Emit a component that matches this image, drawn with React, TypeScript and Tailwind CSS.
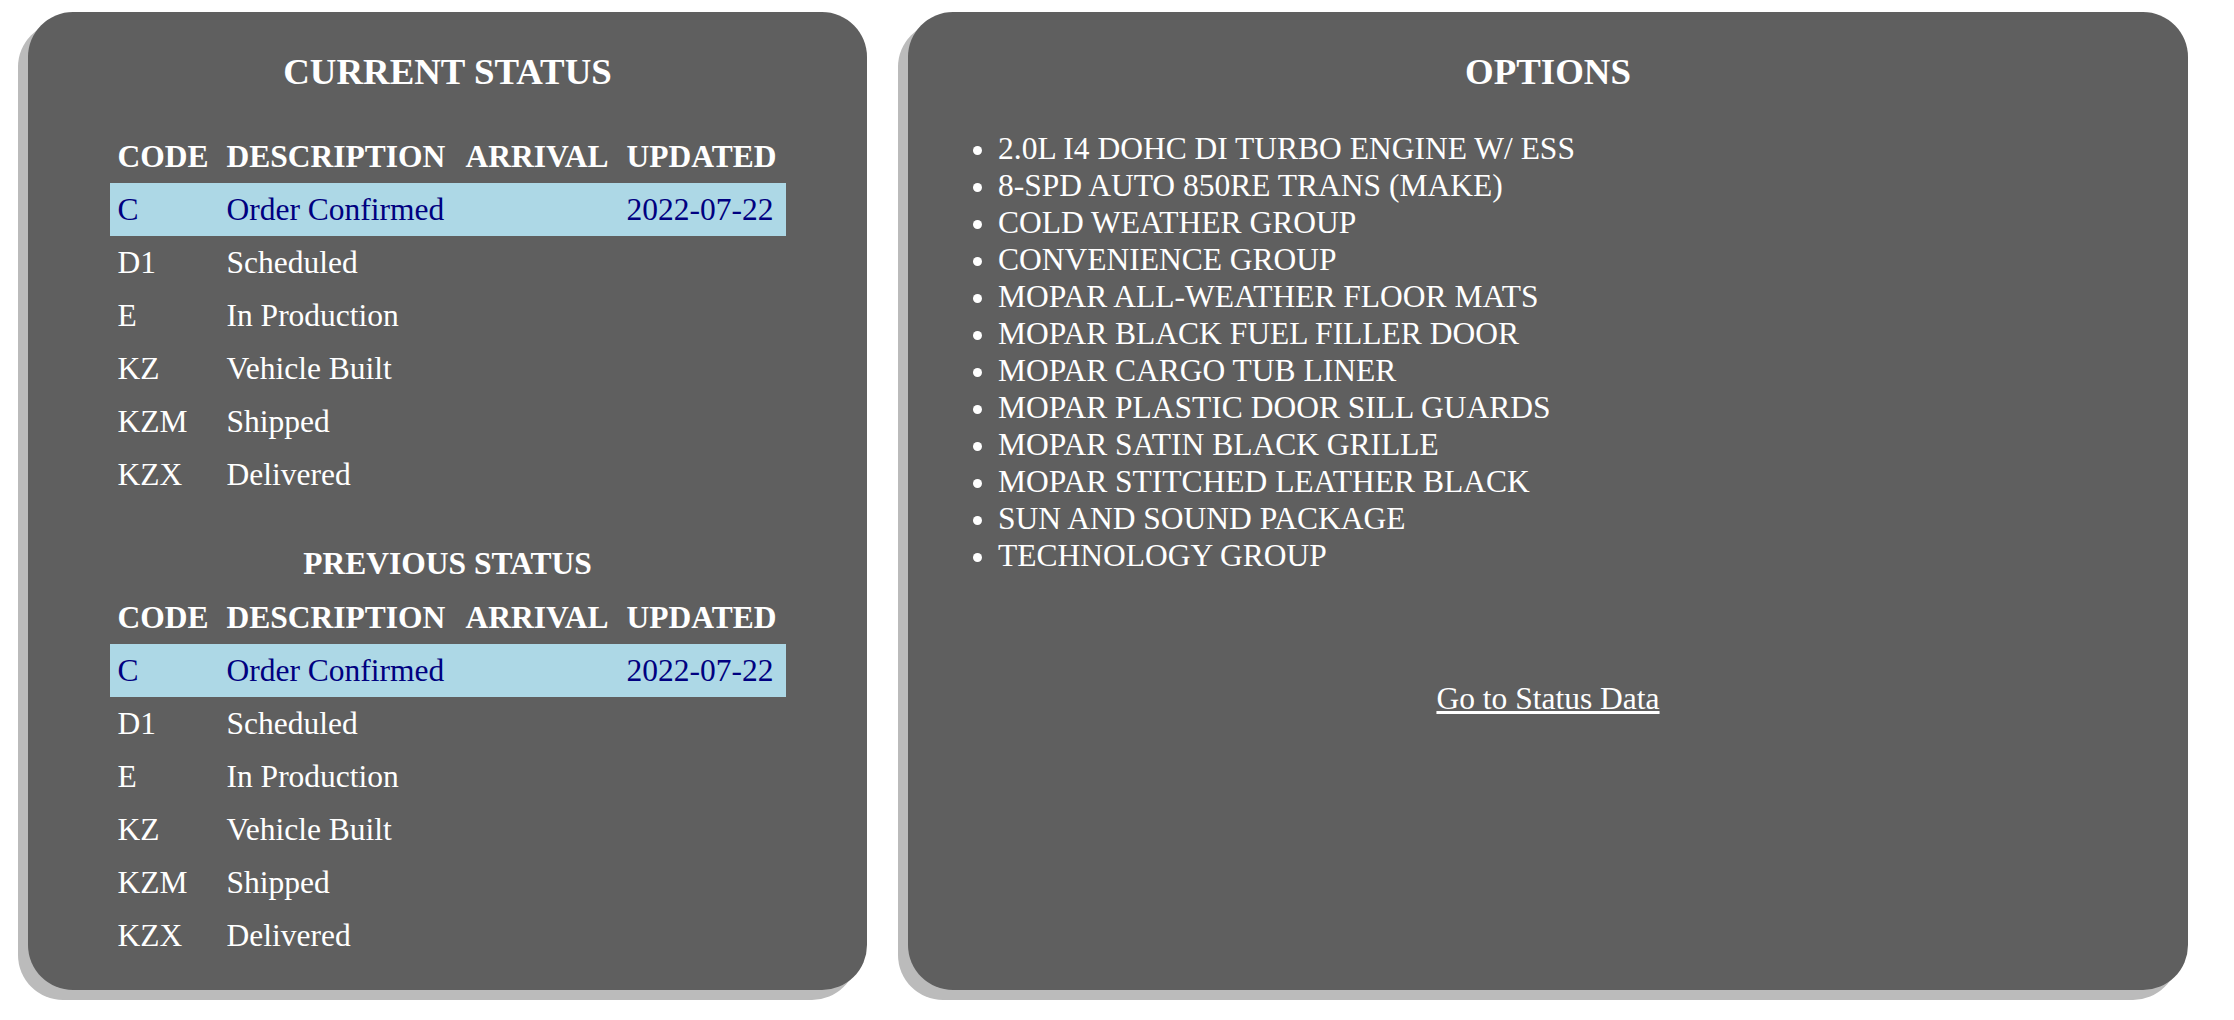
const rows = [
  { code: "C", desc: "Order Confirmed", arrival: "", updated: "2022-07-22", current: true },
  { code: "D1", desc: "Scheduled", arrival: "", updated: "" },
  { code: "E", desc: "In Production", arrival: "", updated: "" },
  { code: "KZ", desc: "Vehicle Built", arrival: "", updated: "" },
  { code: "KZM", desc: "Shipped", arrival: "", updated: "" },
  { code: "KZX", desc: "Delivered", arrival: "", updated: "" },
];

const options = [
  "2.0L I4 DOHC DI TURBO ENGINE W/ ESS",
  "8-SPD AUTO 850RE TRANS (MAKE)",
  "COLD WEATHER GROUP",
  "CONVENIENCE GROUP",
  "MOPAR ALL-WEATHER FLOOR MATS",
  "MOPAR BLACK FUEL FILLER DOOR",
  "MOPAR CARGO TUB LINER",
  "MOPAR PLASTIC DOOR SILL GUARDS",
  "MOPAR SATIN BLACK GRILLE",
  "MOPAR STITCHED LEATHER BLACK",
  "SUN AND SOUND PACKAGE",
  "TECHNOLOGY GROUP",
];

function StatusTable() {
  return (
    <table className="mx-auto w-[676px] table-fixed border-collapse">
      <thead>
        <tr className="h-[53px] text-left font-bold">
          <th className="w-[109px] px-[8px]">CODE</th>
          <th className="w-[239px] px-[8px]">DESCRIPTION</th>
          <th className="w-[161px] px-[8px]">ARRIVAL</th>
          <th className="w-[167px] px-[8px]">UPDATED</th>
        </tr>
      </thead>
      <tbody>
        {rows.map((r) => (
          <tr key={r.code} className={r.current ? "h-[53px] bg-[#add8e6] text-[#000080]" : "h-[53px]"}>
            <td className="px-[8px] whitespace-nowrap">{r.code}</td>
            <td className="px-[8px] whitespace-nowrap">{r.desc}</td>
            <td className="px-[8px] whitespace-nowrap">{r.arrival}</td>
            <td className="px-[8px] whitespace-nowrap">{r.updated}</td>
          </tr>
        ))}
      </tbody>
    </table>
  );
}

export default function App() {
  return (
    <div className="flex min-h-[1020px] gap-[41px] bg-white pl-[28px] pt-[12px] font-['Liberation_Serif',serif] text-[31.5px] leading-[normal] text-white">
      {/* Status card */}
      <section className="h-[978px] w-[839px] rounded-[45px] bg-[#5f5f5f] shadow-[-10px_10px_0_#bbbbbb]">
        <h3 className="mt-[38px] mb-[37px] text-center text-[36.85px] font-bold">CURRENT STATUS</h3>
        <StatusTable />
        <h4 className="mt-[45px] mb-[9px] text-center font-bold">PREVIOUS STATUS</h4>
        <StatusTable />
      </section>

      {/* Options card */}
      <section className="flex h-[978px] w-[1280px] flex-col rounded-[45px] bg-[#5f5f5f] shadow-[-10px_10px_0_#bbbbbb]">
        <h3 className="mt-[38px] mb-[37px] text-center text-[36.85px] font-bold">OPTIONS</h3>
        <ul className="ml-[50px] list-disc pl-[40px] leading-[37px]">
          {options.map((o) => (
            <li key={o}>{o}</li>
          ))}
        </ul>
        <div className="mt-[107px] text-center">
          <a href="#" className="text-white underline">
            Go to Status Data
          </a>
        </div>
      </section>
    </div>
  );
}
